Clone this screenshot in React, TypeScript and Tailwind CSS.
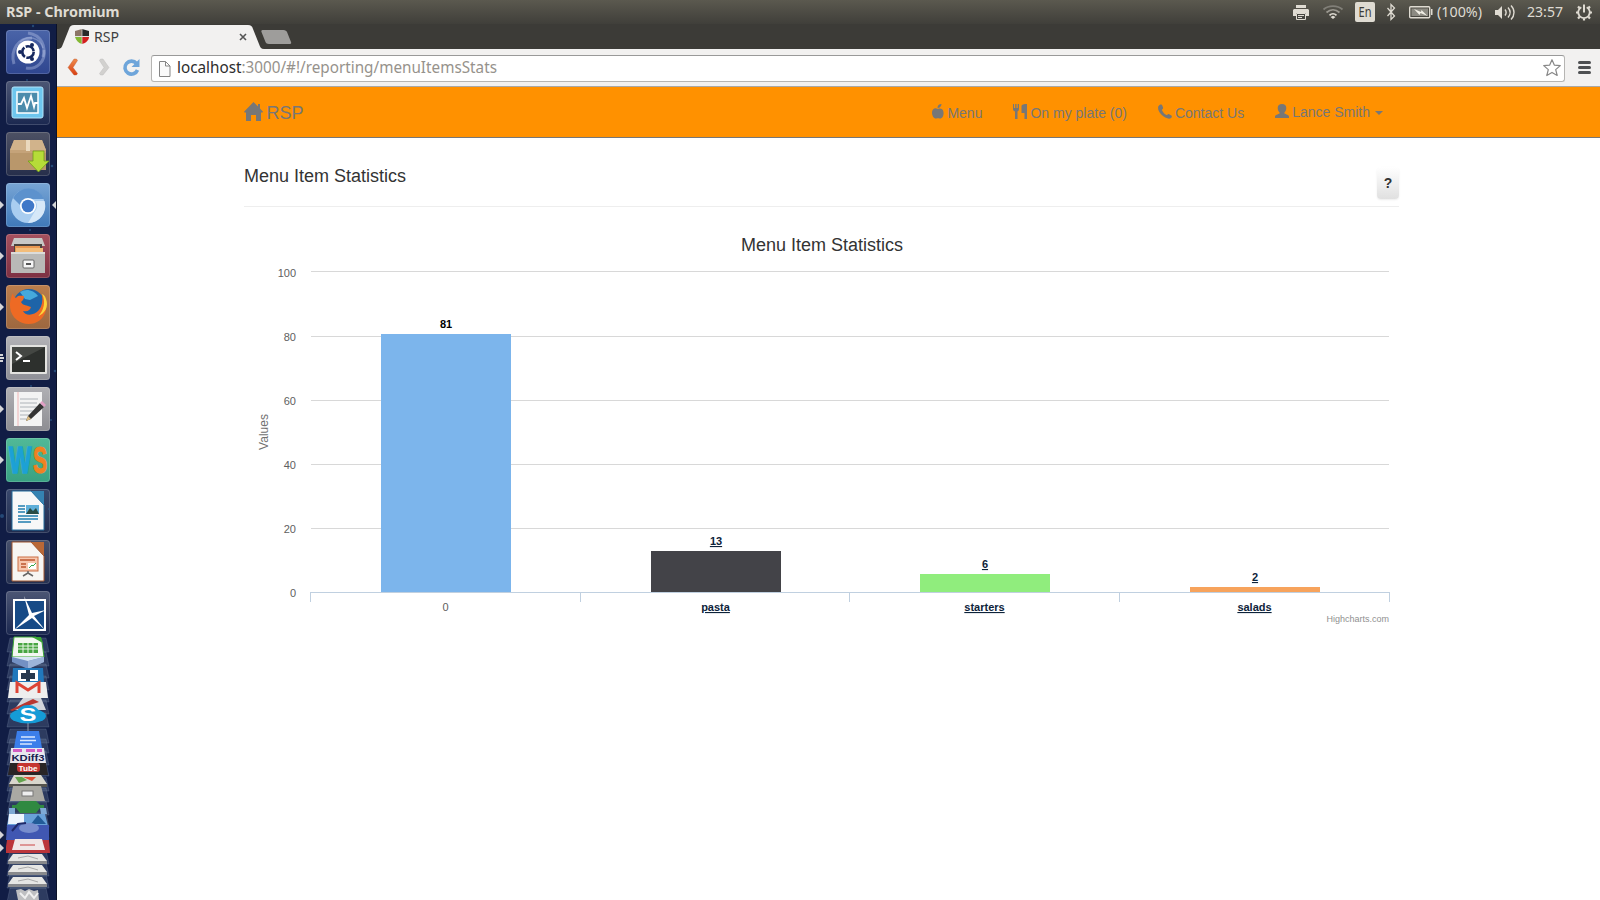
import React from 'react';

const SANS = "font-['Liberation_Sans',Arial,sans-serif]";

function Tile({ id, from, to, children }: { id: string; from: string; to: string; children: React.ReactNode }) {
  return (
    <svg viewBox="0 0 44 44" className="block h-[44px] w-[44px] shrink-0">
      <defs>
        <linearGradient id={id} x1="0" y1="0" x2="0" y2="1">
          <stop offset="0" stopColor={from} />
          <stop offset="1" stopColor={to} />
        </linearGradient>
      </defs>
      <rect width="44" height="44" rx="3.5" fill={`url(#${id})`} />
      <rect x=".5" y=".5" width="43" height="43" rx="3" fill="none" stroke="#ffffff" strokeOpacity=".16" />
      {children}
    </svg>
  );
}

function Launcher() {
  return (
    <aside className="relative flex w-[57px] shrink-0 flex-col gap-[7px] overflow-hidden border-r border-[#0b1128] bg-[#111d45] pl-[6px] pt-[6px]">
      <svg className="absolute left-0 top-0 h-[876px] w-[56px]" viewBox="0 24 56 876">
        <g fill="#2d5c8c" opacity=".7">
          <circle cx="33" cy="26" r="1.2" /><circle cx="52" cy="166" r="1.3" /><circle cx="27" cy="80" r="1" />
          <circle cx="30" cy="230" r="1" /><circle cx="2" cy="516" r="2" /><circle cx="49" cy="509" r="1" />
          <circle cx="31" cy="386" r="1" /><circle cx="55" cy="371" r="1.3" /><circle cx="51" cy="420" r="1" />
        </g>
        <g fill="#d5d5d8">
          <path d="M0 201l4 4-4 4zM56 201l-4 4 4 4zM0 252l4 4-4 4zM0 303l4 4-4 4zM0 405l4 4-4 4zM0 456l4 4-4 4zM0 831l4 4-4 4zM0 844l4 4-4 4z" />
          <path d="M0 354h3v2H0zM0 357h4v2H0zM0 360h3v2H0z" />
        </g>
      </svg>
      <Tile id="t0" from="#4a64a8" to="#2f468f">
        <g fill="none" stroke="#b8c6e8" strokeOpacity=".4" strokeWidth="3">
          <path d="M8 34C4 20 12 8 26 8" /><path d="M22 3c14 2 18 14 15 24" /><path d="M38 20c2 12-8 20-18 18" /><path d="M14 12C22 4 34 8 37 18" strokeWidth="1.5" />
        </g>
        <circle cx="22" cy="22" r="11.5" fill="#fff" />
        <circle cx="22" cy="22" r="5.7" fill="none" stroke="#17295f" strokeWidth="2.6" strokeDasharray="10.4 1.5" />
        <g fill="#17295f"><circle cx="14" cy="22" r="2" /><circle cx="26" cy="15.1" r="2" /><circle cx="26" cy="28.9" r="2" /></g>
      </Tile>
      <Tile id="t1" from="#4c5674" to="#1b2850">
        <rect x="6" y="6" width="31" height="31" rx="2" fill="#6ec6ee" stroke="#b3e4fa" strokeWidth="1" />
        <rect x="11" y="11" width="21" height="21" fill="#4c8cac" stroke="#fff" strokeWidth="1.5" />
        <path d="M12 23h3l3-6 3 10 4-12 3 11 1-4h3" fill="none" stroke="#fff" strokeWidth="1.8" />
      </Tile>
      <Tile id="t2" from="#4d5164" to="#262e4b">
        <path d="M8 8h28l4 10v20H4V18z" fill="#b9976b" />
        <path d="M8 8h28l4 10H4z" fill="#d1b38b" /><path d="M4 18h36v3H4z" fill="#c5a379" />
        <path d="M20 8h4v11h-4z" fill="#ead9bd" />
        <path d="M27 19h11v10h5L32.500 40 22 29h5z" fill="#b6dc38" stroke="#719f18" strokeWidth=".8" />
      </Tile>
      <Tile id="t3" from="#78a5d5" to="#3f79b9">
        <circle cx="22" cy="23" r="17" fill="#a9cdf0" />
        <path d="M7 15a17 17 0 0 1 31 1H22a8 8 0 0 0-8 6z" fill="#5d92cd" />
        <path d="M38.500 18A17 17 0 0 1 22 40l7-12a8 8 0 0 0 0-10z" fill="#d6e8f8" />
        <circle cx="22" cy="23" r="8" fill="#fff" /><circle cx="22" cy="23" r="6.300" fill="#3f78c8" />
      </Tile>
      <Tile id="t4" from="#a5505e" to="#7d3042">
        <path d="M8 4h28l3 8H5z" fill="#c8c8c6" /><path d="M8 10h28v9H8z" fill="#4b443f" />
        <path d="M9 12h25v7H9z" fill="#e99750" /><path d="M10 14h27v4H10z" fill="#f3bd7a" />
        <path d="M5 18h34v21H5z" fill="#b9b9b7" /><path d="M5 18h34v2H5z" fill="#dcdcda" />
        <rect x="17" y="26" width="11" height="8" rx="1" fill="#f5f5f5" stroke="#666" /><path d="M20 29h5v2h-5z" fill="#555" />
      </Tile>
      <Tile id="t5" from="#bb7d4c" to="#9d673f">
        <circle cx="23" cy="20" r="16" fill="#1e64a8" /><path d="M14 7c6-4 14-2 18 4l-8 4-5-1z" fill="#45a9dc" />
        <path d="M7 8c-5 9-4 21 4 27 10 8 26 4 29-10 1-6-1-12-4-15 1 6 0 11-3 15-5 6-14 6-16 1 5 1 7-1 8-4-4-2-8-1-10-5 2-2 3-3 3-6-4 0-6-1-8 2-2-1-3-3-3-5z" fill="#ee6a24" />
        <path d="M36 9c4 7 2 17-4 22 7-2 11-10 8-17-1-3-2-4-4-5z" fill="#fcd43c" />
      </Tile>
      <Tile id="t6" from="#b2b2b6" to="#8e8f96">
        <rect x="4" y="9" width="37" height="29" rx="1" fill="#e3e3e0" /><rect x="6" y="11" width="33" height="25" fill="#2d302d" />
        <path d="M6 11h33L6 28z" fill="#444743" />
        <path d="M10 16l5 4-5 4M17 25h7" fill="none" stroke="#fff" strokeWidth="2" />
      </Tile>
      <Tile id="t7" from="#b0b0b4" to="#8d8d92">
        <path d="M8 5h28v34H8z" fill="#f3f3f3" /><path d="M12 5v34" stroke="#efa5a5" strokeWidth=".8" />
        <path d="M14 12h18M14 16h17M14 20h18M14 24h15M14 28h12M14 32h7" stroke="#aeb3b8" strokeWidth="1" />
        <path d="M22 29L34 16l4 4-13 12-5 2z" fill="#333" /><path d="M22 29l-2 5 5-2z" fill="#dfbd83" /><path d="M34 16l2-2 4 4-2 2z" fill="#e19fc5" />
      </Tile>
      <Tile id="t8" from="#51b998" to="#38a182">
        <text transform="translate(3 35) scale(.64 1)" fontFamily="Liberation Sans" fontWeight="700" fontSize="37" fill="#1ca1d6" stroke="#1ca1d6" strokeWidth="1.600">W</text>
        <text transform="translate(27 35) scale(.57 1)" fontFamily="Liberation Sans" fontWeight="700" fontSize="37" fill="#f08221" stroke="#f08221" strokeWidth="1.200">S</text>
      </Tile>
      <Tile id="t9" from="#39486c" to="#202c4f">
        <path d="M6 2h19l13 14v25H6z" fill="#f7f8f8" stroke="#226d9c" /><path d="M25 2h13v14z" fill="#3583b2" />
        <path d="M12 17h7M12 20h7M12 23h7M12 27h20M12 30h20M12 33h13" stroke="#217eaf" strokeWidth="1.500" />
        <path d="M20 16h13v9H20z" fill="#5eafd9" /><path d="M20 25l4-6 3 3 3-3 3 6z" fill="#294c45" />
      </Tile>
      <Tile id="t10" from="#46506b" to="#253051">
        <path d="M6 2h19l13 14v25H6z" fill="#f7f6f3" stroke="#a2562e" /><path d="M25 2h13v14z" fill="#b96836" />
        <rect x="12" y="17" width="20" height="14" fill="#f7c8af" stroke="#cb6f45" /><path d="M14 20h15M15 24h5M15 27h5" stroke="#bd5730" strokeWidth="1.600" />
        <path d="M22 23h8v6h-8z" fill="#fff" /><path d="M23 28l3-3 1 1 3-3" stroke="#38a74b" fill="none" /><path d="M22 31v2l-5 3M22 33l5 3" stroke="#666" fill="none" strokeWidth="1.500" />
      </Tile>
      <Tile id="t11" from="#4c5674" to="#1b2850">
        <rect x="8" y="9" width="31" height="30" fill="#174a86" stroke="#fff" strokeWidth="2" />
        <path d="M18 5l8 17 14-3-12 6 11 14-13-12L8 39l15-15z" fill="#fff" />
      </Tile>
      <svg className="absolute left-[6px] top-[606px] h-[270px] w-[44px]" viewBox="0 0 44 270">
        <g fill="#7180a0" fillOpacity=".3" stroke="#9aa8c4" strokeOpacity=".2">
          {[8, 22, 34, 46, 58, 70, 83, 99, 109, 121, 132, 147, 158, 171, 183, 195, 208, 220, 232, 244, 258].map((y) => (
            <path key={y} d={`M4 ${y}h36l3 14H1z`} />
          ))}
        </g>
        <path d="M8 7h22l6 5 2 15H6z" fill="#f4f8f1" stroke="#3da836" /><path d="M26 7h9l2 6z" fill="#3aa535" />
        <path d="M12 13h20v10H12z" fill="#48a541" /><path d="M12 16h20M12 19h20M17 13v10M22 13v10M27 13v10" stroke="#e9f5e6" />
        <path d="M6 27h32v5l-16 7-16-7z" fill="#7390c3" /><path d="M6 27h32l-16 4z" fill="#dae6f4" /><path d="M22 31l16-4v5l-16 7z" fill="#9db4d9" />
        <path d="M7 38h30l1 15H6z" fill="#2178bc" /><path d="M12 40h20v11H12z" fill="#fff" /><path d="M15 43h14v6H15z" fill="#26384f" /><path d="M20 40h4v11h-4z" fill="#26384f" />
        <path d="M4 52h36l2 16H2z" fill="#eee" /><path d="M11 63V53l11 7 11-7v10" fill="none" stroke="#dd4436" strokeWidth="3" />
        <path d="M17 68h18l5 12H8z" fill="#d2d5db" /><path d="M4 80l23-11 6 3-27 9z" fill="#b93731" />
        <ellipse cx="22" cy="86" rx="18" ry="7.500" fill="#159bd7" /><ellipse cx="22" cy="83" rx="11" ry="8" fill="#159bd7" />
        <text x="22" y="90.500" textAnchor="middle" fontFamily="Liberation Sans" fontWeight="700" fontSize="19" textLength="17" lengthAdjust="spacingAndGlyphs" fill="#fff">S</text>
        <path d="M22 93v13" stroke="#9099ad" />
        <path d="M11 101h22l3 17H8z" fill="#3b7eea" /><path d="M15 107h14M14 110.500h16M14 114h12" stroke="#d9e7fe" strokeWidth="1.500" />
        <path d="M5 118h33l2 15H4z" fill="#e9e7ee" /><path d="M7 119h9v3H7zM20 119h9v3h-9zM31 119h5v3h-5z" fill="#d35cc1" />
        <text x="22" y="130.500" textAnchor="middle" fontFamily="Liberation Sans" fontWeight="700" fontSize="8.500" textLength="33" lengthAdjust="spacingAndGlyphs" fill="#17204f">KDiff3</text>
        <path d="M4 133h36l2 12H2z" fill="#292526" /><rect x="11" y="133" width="23" height="9" rx="3" fill="#c53531" />
        <text x="22" y="140.500" textAnchor="middle" fontFamily="Liberation Sans" fontWeight="700" fontSize="8" textLength="19" lengthAdjust="spacingAndGlyphs" fill="#fff">Tube</text>
        <path d="M8 145h27l6 9H3z" fill="#d8d6cc" /><path d="M9 147h7l5 3-8 3z" fill="#63a34c" /><path d="M17 147h13l-4 4z" fill="#e04f36" /><path d="M3 154h38v3H3z" fill="#54534e" />
        <path d="M7 156h28l4 15H4z" fill="#aaa9a3" /><rect x="16" y="161" width="11" height="5" fill="#eee" stroke="#777" />
        <path d="M14 171h16l4 4h4v3h-4l-4 5H14l-4-5H6v-3h4z" fill="#308941" /><path d="M3 178h6v6H3zM34 178h6l1 6h-6z" fill="#7fa9d5" />
        <path d="M3 184h36l3 12H1z" fill="#69a1d9" /><path d="M3 184h15v10H2z" fill="#eef5ff" /><path d="M25 194l7-9 8 9z" fill="#225b98" />
        <path d="M1 195h42v15H0z" fill="#4057b2" /><ellipse cx="23" cy="198" rx="10" ry="5" fill="#788dcd" /><path d="M6 201l6-7 8-1" stroke="#202a6a" strokeWidth="2" fill="none" />
        <path d="M1 210h42l1 13H-1z" fill="#bb353a" /><path d="M9 209h27l3 11H6z" fill="#f0e7e7" /><path d="M14 215h15" stroke="#cb4545" />
        {[224, 235, 247].map((y) => (
          <g key={y}><path d={`M7 ${y}h29l5 7H2z`} fill="#e6e6e4" /><path d={`M2 ${y + 7}h39v3H2z`} fill="#88898c" /><path d={`M12 ${y + 4}l10-2 10 3`} stroke="#aaa" fill="none" /></g>
        ))}
        <path d="M10 260l5-1 4 2 4-2 5 2 4-1 1 10H12z" fill="#bebfc1" /><path d="M14 263l5 5 4-6 5 6 4-5" stroke="#efefef" fill="none" strokeWidth="2" />
      </svg>
    </aside>
  );
}

function SystemBar() {
  return (
    <header className="flex h-[24px] shrink-0 items-center justify-between bg-linear-to-b from-[#5b594f] to-[#403f3a] font-['Noto_Sans',sans-serif] text-[#dfdbd2]">
      <svg className="h-[24px] w-[130px]" viewBox="0 0 130 24">
        <text x="6" y="17" fontSize="14" fontWeight="700" textLength="113.500" lengthAdjust="spacingAndGlyphs" fill="#dfdbd2">RSP - Chromium</text>
      </svg>
      <svg className="h-[24px] w-[320px]" viewBox="0 0 320 24" fill="none">
        <g fill="#dfdbd2">
          <path d="M16 5h10v3H16zM14 9h14l1 1v6h-3v-3H16v3h-3v-6z" />
          <path d="M16.500 13.500h9v6h-9z" fill="#45443f" stroke="#dfdbd2" /><path d="M18 15h6v1h-6zM18 17h4v1h-4z" />
          <rect x="75" y="2" width="20" height="20" rx="2" />
        </g>
        <text x="85" y="17" fontSize="13.500" textAnchor="middle" textLength="13" lengthAdjust="spacingAndGlyphs" fill="#3c3b37">En</text>
        <g strokeWidth="1.700">
          <path d="M43.500 9.500c5-4.600 14-4.600 19 0" stroke="#817f78" /><path d="M46.500 12.500c4-3.600 9-3.600 13 0" stroke="#9b9890" /><path d="M49.500 15.300c2-2 5-2 7 0" stroke="#dfdbd2" />
        </g>
        <path d="M50.500 17l2.500-1.200 2.500 1.200-2.500 2z" fill="#dfdbd2" />
        <path d="M107.500 8l7 8-3.500 3.500v-15l3.500 3.500-7 8" stroke="#dfdbd2" strokeWidth="1.300" />
        <rect x="129.700" y="6.700" width="20" height="11" rx="1" stroke="#dfdbd2" strokeWidth="1.400" /><path d="M131.500 8.500h16.500v7.500h-16.500z" fill="#8c8a82" /><path d="M151 9h1.500v6H151z" fill="#dfdbd2" />
        <path d="M134 9l7 3 .5-2 6 6-7-3-1 2z" fill="#f1eee5" />
        <text x="157" y="17" fontSize="14" textLength="45" lengthAdjust="spacingAndGlyphs" fill="#dfdbd2">(100%)</text>
        <path d="M215 10h3l4-4v13l-4-4h-3z" fill="#dfdbd2" />
        <path d="M225 9.500c1.500 2 1.500 4 0 6M228 7.500c2.600 3 2.600 7 0 10M231 5.500c4 4 4 10 0 14" stroke="#dfdbd2" strokeWidth="1.400" />
        <text x="247" y="17" fontSize="14" textLength="36" lengthAdjust="spacingAndGlyphs" fill="#dfdbd2">23:57</text>
        <path d="M301.300 7.200a5.800 5.800 0 1 0 5.400 0" stroke="#dfdbd2" strokeWidth="1.800" /><path d="M304 4.500v8" stroke="#dfdbd2" strokeWidth="2" />
        <path d="M298 12.500h-2M312 12.500h-2M304 18.500v2M299.600 8.100l-1.600-1.600M308.400 8.100l1.600-1.600M299.600 16.900l-1.600 1.600M308.400 16.900l1.600 1.600" stroke="#dfdbd2" strokeWidth="2.200" />
      </svg>
    </header>
  );
}

function TabStrip() {
  return (
    <div className="h-[25px] bg-[#3c3b37]">
      <svg className="block h-[25px] w-[320px]" viewBox="57 24 320 25">
        <path d="M57 49c4 0 5-2 6-5l6-15c1-3 2-4 5-4h174c3 0 4 1 5 4l6 15c1 3 2 5 5 5z" fill="#f2f1f0" />
        <path d="M262.500 30h21c2 0 3 1 3.500 2l4 10c.5 1 0 2-1 2h-21c-2 0-3-1-3.500-2l-4-10c-.5-1 0-2 1-2z" fill="#9e9d9b" />
        <path d="M75 31l7-2v7h-7z" fill="#8c7566" /><path d="M82 29l7 2v5h-7z" fill="#292929" />
        <path d="M75 37h7v7c-4-1-6-4-7-7z" fill="#83b833" /><path d="M82 37h7c0 3-3 6-7 7z" fill="#d3201f" />
        <path d="M82 29v15M75 36.500h14" stroke="#ddd" strokeWidth=".7" />
        <text x="94" y="42" fontFamily="Noto Sans" fontSize="14" textLength="25" lengthAdjust="spacingAndGlyphs" fill="#3f3f3f">RSP</text>
        <path d="M240 34l6 6M246 34l-6 6" stroke="#555" strokeWidth="1.600" />
      </svg>
    </div>
  );
}

function Toolbar() {
  return (
    <div className="flex h-[38px] items-center border-b border-[#a8a8a8] bg-[#f2f1f0] pr-[9px]">
      <svg className="h-[37px] w-[94px] shrink-0" viewBox="57 49 94 37" fill="none">
        <defs>
          <linearGradient id="back" x1="0" y1="0" x2="0" y2="1"><stop offset="0" stopColor="#ee8b4d" /><stop offset="1" stopColor="#d93f12" /></linearGradient>
        </defs>
        <path d="M74 59h2.500l1 1.500-4.500 7 4.500 6-1 1.500H74l-6-7.500z" fill="url(#back)" stroke="#bd5a34" strokeWidth=".4" />
        <path d="M103 59h-2.500l-1 1.500 4.500 7-4.500 6 1 1.500h2.500l6-7.500z" fill="#d2d1cf" stroke="#b8b7b5" strokeWidth=".4" />
        <path d="M136.500 63.500A6.500 6.500 0 1 0 137.500 70" stroke="#6ea5da" strokeWidth="3.600" /><path d="M139.500 59v8h-8z" fill="#6ea5da" />
      </svg>
      <div className="mt-px flex h-[27px] grow items-center justify-between rounded-[3px] border border-[#b6b5b3] border-t-[#999] bg-white pl-[7px] pr-[3px]">
        <svg className="h-[25px] w-[360px]" viewBox="159 55 360 25">
          <path d="M159.500 60.500h6l4.500 4.500v10.500h-10.500zM165.500 60.500V65h4.500" fill="#fafafa" stroke="#858585" />
          <text y="72" x="177" fontFamily="Noto Sans" fontSize="16" textLength="320" lengthAdjust="spacingAndGlyphs" fill="#96928c"><tspan fill="#2d2d2d">localhost</tspan>:3000/#!/reporting/menuItemsStats</text>
        </svg>
        <svg className="h-[20px] w-[18px]" viewBox="0 0 18 20"><path d="M9 1.700l2.300 5.400 6 .5-4.600 4 1.500 5.900L9 14.400l-5.200 3.100 1.500-5.900-4.600-4 6-.5z" fill="#fff" stroke="#888" strokeWidth="1.200" strokeLinejoin="round" /></svg>
      </div>
      <div className="ml-[13px] flex w-[13px] flex-col gap-[2px]">
        <i className="h-[3px] rounded-sm bg-[#4e5052]" /><i className="h-[3px] rounded-sm bg-[#4e5052]" /><i className="h-[3px] rounded-sm bg-[#4e5052]" />
      </div>
    </div>
  );
}

function NavBar() {
  return (
    <nav className={`flex h-[51px] justify-between border-b border-[#777] bg-[#ff9100] pl-[187px] pr-[217px] text-[#777] ${SANS}`}>
      <a className="flex items-start gap-[3.5px] pt-[15px] text-[18px] leading-5">
        <svg className="h-[19px] w-[19px]" viewBox="0 0 19 19"><path d="M9.500 0l4.500 4.600V2h2v4.600l3 3.200-.5.700H17V19h-5v-6H7v6H2v-8.500H.5L0 9.800z" fill="#777" /></svg>
        <span className="pt-[3px] leading-[16px]">RSP</span>
      </a>
      <div className="flex items-start pt-[16px] text-[14px] leading-5">
        <a className="flex gap-[3px]"><svg className="mt-px h-[15px] w-[12px]" viewBox="0 0 12 15"><path d="M6 5C3 3 0 5 0 8.500 0 12 2 15 4.500 14.500c1-.5 2-.5 3 0C10 15 12 12 11.500 8 11 4.500 8 4 6 5zM5.500 4C5.500 1.500 7 0 9.500 0 9.500 2 8 4 5.500 4z" fill="#777" /></svg>Menu</a>
        <a className="ml-[31px] flex gap-[3px]"><svg className="mt-px h-[15px] w-[14px]" viewBox="0 0 14 15"><path d="M0 0h1v4h1.200V0h1.300v4h1.200V0h1.300v5c0 1-.5 2-1.500 2.500V15h-2.500V7.500C.5 7 0 6 0 5zM8.500 2c0-1.500 2.500-2 5.500-2v15h-2.500V9h-3z" fill="#777" /></svg>On my plate (0)</a>
        <a className="ml-[31px] flex gap-[3px]"><svg className="mt-px h-[15px] w-[14px]" viewBox="0 0 14 15"><path d="M1.500 1C3 .2 4 .5 4.300 1.500l.8 2.300C5.300 5 4 5.200 4 6.200c1 2.300 2.500 3.800 4.500 4.800 1 0 1.200-1.300 2.200-1l2.600 1.500c.9.500.7 1.300 0 2.200-1.500 1.500-3.500 1-6-.2C4 11.500 1.500 9 .4 6 0 4-.3 2.500 1.500 1z" fill="#777" /></svg>Contact Us</a>
        <a className="-mt-px ml-[31px] flex gap-[3px]"><svg className="mt-[2px] h-[14px] w-[14px]" viewBox="0 0 14 14"><path d="M7 0c2.700 0 4.300 1.500 4.300 4 0 2-1 3.500-1.900 4.500v1c1.500.8 4.600 1.500 4.600 3V14H0v-1.500c0-1.500 3.100-2.200 4.600-3v-1C3.700 7.500 2.700 6 2.700 4 2.700 1.500 4.300 0 7 0z" fill="#777" /></svg>Lance Smith<i className="ml-[2px] mt-[9px] h-0 w-0 border-x-4 border-t-4 border-x-transparent border-t-[#777]" /></a>
      </div>
    </nav>
  );
}

const bars = [
  { name: '0', value: 81, x: 381, top: 334, fill: '#7cb5ec', link: false },
  { name: 'pasta', value: 13, x: 651, top: 551, fill: '#434348', link: true },
  { name: 'starters', value: 6, x: 920, top: 574, fill: '#90ed7d', link: true },
  { name: 'salads', value: 2, x: 1190, top: 587, fill: '#f7a35c', link: true },
];

function Chart() {
  return (
    <svg className="block h-[410px] w-[1155px]" viewBox="244 220 1155 410" fontFamily="Liberation Sans, Arial, sans-serif">
      <text x="822" y="251" textAnchor="middle" fontSize="18" fill="#333">Menu Item Statistics</text>
      {[100, 80, 60, 40, 20, 0].map((v, i) => (
        <g key={v}>
          {v > 0 && <path d={`M311 ${[271.5, 336.5, 400.5, 464.5, 528.5][i]}H1389`} stroke="#d8d8d8" />}
          <text x="296" y={[277, 341, 405, 469, 533, 597][i]} textAnchor="end" fontSize="11" fill="#606060">{v}</text>
        </g>
      ))}
      <text transform="translate(268 432) rotate(-90)" textAnchor="middle" fontSize="12" fill="#707070">Values</text>
      {bars.map((b) => (
        <g key={b.name} fontSize="11" textAnchor="middle">
          <rect x={b.x} y={b.top} width="130" height={592 - b.top} fill={b.fill} />
          <text x={b.x + 65} y={b.top - 6} fontWeight="700" fill={b.link ? '#0d233a' : '#000'} textDecoration={b.link ? 'underline' : 'none'}>{b.value}</text>
          <text x={b.x + 64.500} y="611" fontWeight={b.link ? 700 : 400} fill={b.link ? '#0d233a' : '#606060'} textDecoration={b.link ? 'underline' : 'none'}>{b.name}</text>
        </g>
      ))}
      <path d="M310 592.500H1390M310.500 592v10M580.500 592v10M849.500 592v10M1119.500 592v10M1389.500 592v10" stroke="#c0d0e0" fill="none" />
      <text x="1389" y="622" textAnchor="end" fontSize="9" fill="#909090">Highcharts.com</text>
    </svg>
  );
}

export default function App() {
  return (
    <div className="flex h-[900px] w-[1600px] flex-col overflow-hidden bg-white">
      <SystemBar />
      <div className="flex min-h-0 grow">
        <Launcher />
        <div className="min-w-0 grow">
          <TabStrip />
          <Toolbar />
          <NavBar />
          <main className={`ml-[187px] w-[1155px] text-[#333] ${SANS}`}>
            <div className="flex h-[69px] items-start justify-between border-b border-[#eee]">
              <h1 className="pt-[28px] text-[18px] leading-5">Menu Item Statistics</h1>
              <button className="mt-[29px] flex h-[32px] w-[22px] items-center justify-center rounded-[4px] bg-linear-to-b from-white to-[#e0e0e0] text-[14px] font-bold shadow-[0_1px_2px_rgba(0,0,0,0.08)]">?</button>
            </div>
            <div className="pt-[13px]">
              <Chart />
            </div>
          </main>
        </div>
      </div>
    </div>
  );
}
